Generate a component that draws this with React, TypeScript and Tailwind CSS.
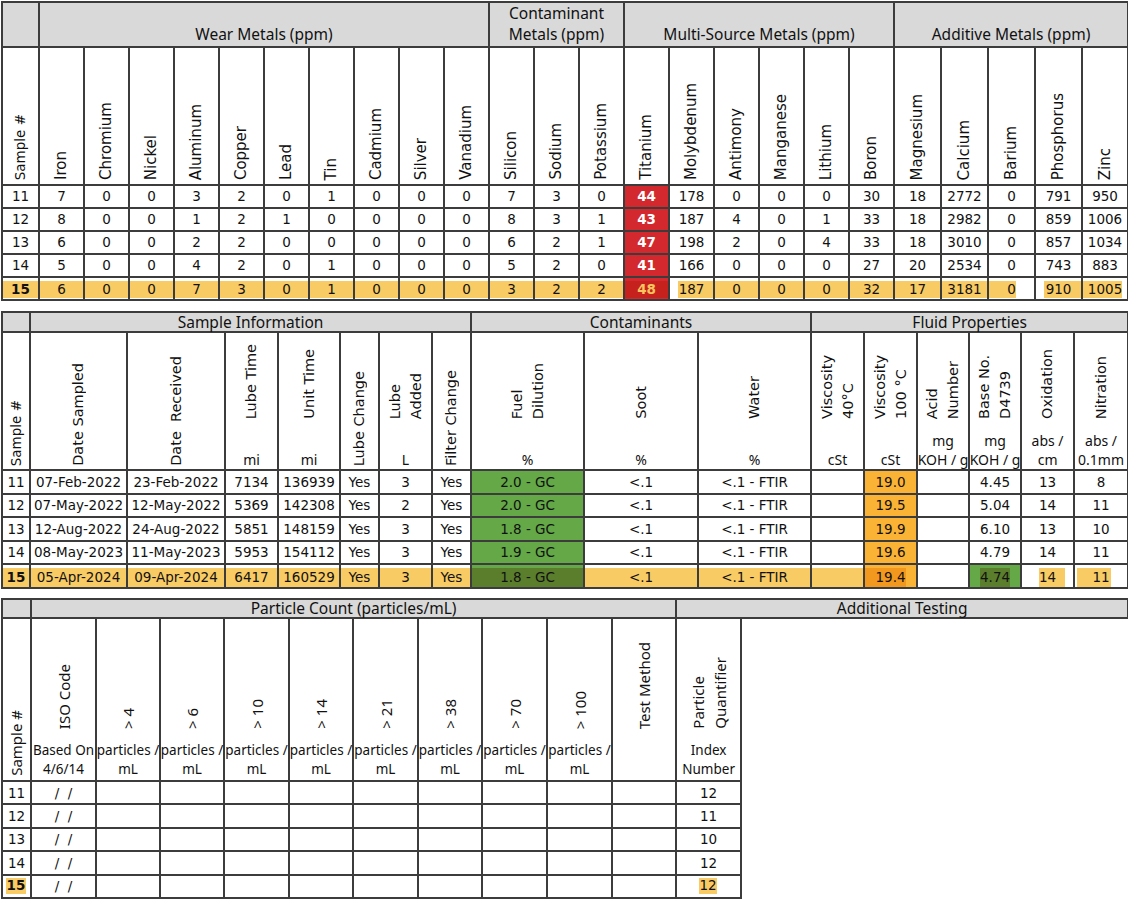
import React from "react";

const B = "border-2 border-[#3c3c3c]";
const DV = "font-['DejaVu_Sans',sans-serif]";
const NS = "font-['Noto_Sans',sans-serif]";
const GREY = "bg-[#d9d9d9]";
const HL = "bg-[#f9cb64]";

type Cell = { v: string; td?: string; band?: string; txt?: string };

// rotated header label, lines start at the bottom
function Rot({ lines, cls }: { lines: string[]; cls: string }) {
  return (
    <div className={`[writing-mode:vertical-rl] rotate-180 text-start whitespace-nowrap ${cls}`}>
      {lines.map((l, i) => (
        <React.Fragment key={i}>
          {i > 0 && <br />}
          {l}
        </React.Fragment>
      ))}
    </div>
  );
}

function DataRow({ cells, rowCls, bandBase }: { cells: Cell[]; rowCls: string; bandBase: string }) {
  return (
    <tr className={rowCls}>
      {cells.map((c, i) => (
        <td
          key={i}
          className={`${B} p-0 text-center ${c.band ? "align-top" : "align-middle"} ${c.td ?? ""}`}
        >
          {c.band ? (
            <div className={`${bandBase} flex items-center justify-center ${c.band}`}>
              <span className={c.txt}>{c.v}</span>
            </div>
          ) : (
            <span className={c.txt}>{c.v}</span>
          )}
        </td>
      ))}
    </tr>
  );
}

/* ---------------- metals ---------------- */

const metalNames = [
  "Iron", "Chromium", "Nickel", "Aluminum", "Copper", "Lead", "Tin", "Cadmium", "Silver", "Vanadium",
  "Silicon", "Sodium", "Potassium",
  "Titanium", "Molybdenum", "Antimony", "Manganese", "Lithium", "Boron",
  "Magnesium", "Calcium", "Barium", "Phosphorus", "Zinc",
];

const metalCols = [
  "w-[37px]",
  "w-[45px]", "w-[45px]", "w-[45px]", "w-[45px]", "w-[45px]", "w-[45px]", "w-[45px]", "w-[45px]", "w-[45px]", "w-[45px]",
  "w-[45px]", "w-[45px]", "w-[45px]",
  "w-[45px]", "w-[45px]", "w-[45px]", "w-[45px]", "w-[45px]", "w-[45px]",
  "w-[47px]", "w-[47px]", "w-[47px]", "w-[47px]", "w-[46px]",
];

const metalData = [
  ["11", "7", "0", "0", "3", "2", "0", "1", "0", "0", "0", "7", "3", "0", "44", "178", "0", "0", "0", "30", "18", "2772", "0", "791", "950"],
  ["12", "8", "0", "0", "1", "2", "1", "0", "0", "0", "0", "8", "3", "1", "43", "187", "4", "0", "1", "33", "18", "2982", "0", "859", "1006"],
  ["13", "6", "0", "0", "2", "2", "0", "0", "0", "0", "0", "6", "2", "1", "47", "198", "2", "0", "4", "33", "18", "3010", "0", "857", "1034"],
  ["14", "5", "0", "0", "4", "2", "0", "1", "0", "0", "0", "5", "2", "0", "41", "166", "0", "0", "0", "27", "20", "2534", "0", "743", "883"],
];

const metal15: Cell[] = [
  { v: "15", band: HL, txt: "font-bold" },
  ...["6", "0", "0", "7", "3", "0", "1", "0", "0", "0", "3", "2", "2"].map((v) => ({ v, band: HL })),
  { v: "48", td: "bg-[#d2282e]", band: "bg-[#c6211c]", txt: "font-bold text-[#f8c55e]" },
  { v: "187", band: `${HL} ml-[8px] pr-[8px]` },
  { v: "0", band: HL },
  { v: "0", band: HL },
  { v: "0", band: HL },
  { v: "32", band: HL },
  { v: "17", band: HL },
  { v: "3181", band: HL },
  { v: "0", band: `${HL} mr-[18px] pl-[18px]` },
  { v: "910", band: `${HL} ml-[8px] pr-[8px]` },
  { v: "1005", band: `${HL} mr-[5px] pl-[5px]` },
];

function MetalsTable() {
  const groups: [string, number][] = [
    ["Wear Metals (ppm)", 10],
    ["Contaminant Metals (ppm)", 3],
    ["Multi-Source Metals (ppm)", 6],
    ["Additive Metals (ppm)", 5],
  ];
  return (
    <table className={`table-fixed border-collapse w-[1126px] ${DV} text-[13.5px]`}>
      <colgroup>
        {metalCols.map((w, i) => (
          <col key={i} className={w} />
        ))}
      </colgroup>
      <thead>
        <tr className="h-[39px]">
          <th className={`${B} ${GREY} p-0`} />
          {groups.map(([g, n]) => (
            <th
              key={g}
              colSpan={n}
              className={`${B} ${GREY} ${NS} p-0 pb-[1px] align-bottom font-normal text-[15.5px] leading-[21px]`}
            >
              {g}
            </th>
          ))}
        </tr>
        <tr className="h-[138px]">
          <th className={`${B} p-0 align-bottom font-normal`}>
            <div className="flex justify-center pb-[4px]">
              <Rot lines={["Sample #"]} cls="text-[13.5px]" />
            </div>
          </th>
          {metalNames.map((m) => (
            <th key={m} className={`${B} p-0 align-bottom font-normal`}>
              <div className="flex justify-center pb-[4px]">
                <Rot lines={[m]} cls="text-[15px]" />
              </div>
            </th>
          ))}
        </tr>
      </thead>
      <tbody>
        {metalData.map((r) => (
          <DataRow
            key={r[0]}
            rowCls="h-[23px]"
            bandBase=""
            cells={r.map((v, i) =>
              i === 14 ? { v, td: "bg-[#d2282e]", txt: "font-bold text-white" } : { v }
            )}
          />
        ))}
        <DataRow rowCls="h-[23px]" bandBase="mt-[3px] h-[17px]" cells={metal15} />
      </tbody>
    </table>
  );
}

/* ---------------- sample / fluid ---------------- */

type H = { lines: string[]; units?: string[] };

const sampleHeads: H[] = [
  { lines: ["Date Sampled"] },
  { lines: ["Date\u00a0 Received"] },
  { lines: ["Lube Time"], units: ["mi"] },
  { lines: ["Unit Time"], units: ["mi"] },
  { lines: ["Lube Change"] },
  { lines: ["Lube", "Added"], units: ["L"] },
  { lines: ["Filter Change"] },
  { lines: ["Fuel", "Dilution"], units: ["%"] },
  { lines: ["Soot"], units: ["%"] },
  { lines: ["Water"], units: ["%"] },
  { lines: ["Viscosity", "40°C"], units: ["cSt"] },
  { lines: ["Viscosity", "100 °C"], units: ["cSt"] },
  { lines: ["Acid", "Number"], units: ["mg", "KOH / g"] },
  { lines: ["Base No.", "D4739"], units: ["mg", "KOH / g"] },
  { lines: ["Oxidation"], units: ["abs /", "cm"] },
  { lines: ["Nitration"], units: ["abs /", "0.1mm"] },
];

const sampleCols = [
  "w-[28px]", "w-[97px]", "w-[98px]", "w-[53px]", "w-[62px]", "w-[39px]", "w-[53px]", "w-[39px]",
  "w-[113px]", "w-[114px]", "w-[113px]",
  "w-[53px]", "w-[53px]", "w-[52px]", "w-[52px]", "w-[53px]", "w-[54px]",
];

const sampleData = [
  ["11", "07-Feb-2022", "23-Feb-2022", "7134", "136939", "Yes", "3", "Yes", "2.0 - GC", "<.1", "<.1 - FTIR", "", "19.0", "", "4.45", "13", "8"],
  ["12", "07-May-2022", "12-May-2022", "5369", "142308", "Yes", "2", "Yes", "2.0 - GC", "<.1", "<.1 - FTIR", "", "19.5", "", "5.04", "14", "11"],
  ["13", "12-Aug-2022", "24-Aug-2022", "5851", "148159", "Yes", "3", "Yes", "1.8 - GC", "<.1", "<.1 - FTIR", "", "19.9", "", "6.10", "13", "10"],
  ["14", "08-May-2023", "11-May-2023", "5953", "154112", "Yes", "3", "Yes", "1.9 - GC", "<.1", "<.1 - FTIR", "", "19.6", "", "4.79", "14", "11"],
];

const sample15: Cell[] = [
  { v: "15", band: HL, txt: "font-bold" },
  ...["05-Apr-2024", "09-Apr-2024", "6417", "160529", "Yes", "3", "Yes"].map((v) => ({ v, band: HL })),
  { v: "1.8 - GC", td: "bg-[#64a847]", band: "bg-[#5a7e2c]" },
  { v: "<.1", band: HL },
  { v: "<.1 - FTIR", band: HL },
  { v: "", band: HL },
  { v: "19.4", td: "bg-[#fbb336]", band: "bg-[#f3981e] mr-[10px] pl-[10px]" },
  { v: "" },
  { v: "4.74", td: "bg-[#64a847]", band: "bg-[#5a7e2c] mx-[10px]" },
  { v: "14", band: `${HL} ml-[17px] mr-[8px] pr-[9px]` },
  { v: "11", band: `${HL} ml-[2px] mr-[16px] pl-[14px]` },
];

function SampleTable() {
  return (
    <table className={`table-fixed border-collapse w-[1126px] mt-[10px] ${DV} text-[13.5px]`}>
      <colgroup>
        {sampleCols.map((w, i) => (
          <col key={i} className={w} />
        ))}
      </colgroup>
      <thead>
        <tr className="h-[20px]">
          <th className={`${B} ${GREY} p-0`} />
          {([
            ["Sample Information", 7],
            ["Contaminants", 3],
            ["Fluid Properties", 6],
          ] as [string, number][]).map(([g, n]) => (
            <th
              key={g}
              colSpan={n}
              className={`${B} ${GREY} ${NS} p-0 align-middle font-normal text-[15.5px] leading-[18px]`}
            >
              {g}
            </th>
          ))}
        </tr>
        <tr className="h-[138px]">
          <th className={`${B} p-0 align-bottom font-normal`}>
            <div className="flex justify-center pb-[3px]">
              <Rot lines={["Sample #"]} cls="text-[13.5px]" />
            </div>
          </th>
          {sampleHeads.map((h, i) => (
            <th key={i} className={`${B} p-0 align-bottom font-normal`}>
              <div className="flex flex-col items-center">
                <div className={h.units ? "pb-[5px]" : "pb-[3px]"}>
                  <Rot lines={h.lines} cls="text-[14.5px] leading-[21px]" />
                </div>
                {h.units && (
                  <div className={`h-[45px] flex flex-col justify-end items-center ${NS} text-[14px] leading-[19px]`}>
                    {h.units.map((u) => (
                      <div key={u} className="whitespace-nowrap">
                        {u}
                      </div>
                    ))}
                  </div>
                )}
              </div>
            </th>
          ))}
        </tr>
      </thead>
      <tbody>
        {sampleData.map((r) => (
          <DataRow
            key={r[0]}
            rowCls="h-[23.5px]"
            bandBase=""
            cells={r.map((v, i) =>
              i === 8
                ? { v, td: "bg-[#64a847]" }
                : i === 12
                ? { v, td: "bg-[#fbb336]" }
                : { v }
            )}
          />
        ))}
        <DataRow rowCls="h-[23.5px]" bandBase="mt-[3px] h-[19px]" cells={sample15} />
      </tbody>
    </table>
  );
}

/* ---------------- particle count ---------------- */

const particleHeads: H[] = [
  { lines: ["ISO Code"], units: ["Based On", "4/6/14"] },
  { lines: ["> 4"], units: ["particles /", "mL"] },
  { lines: ["> 6"], units: ["particles /", "mL"] },
  { lines: ["> 10"], units: ["particles /", "mL"] },
  { lines: ["> 14"], units: ["particles /", "mL"] },
  { lines: ["> 21"], units: ["particles /", "mL"] },
  { lines: ["> 38"], units: ["particles /", "mL"] },
  { lines: ["> 70"], units: ["particles /", "mL"] },
  { lines: ["> 100"], units: ["particles /", "mL"] },
  { lines: ["Test Method"], units: [] },
  { lines: ["Particle", "Quantifier"], units: ["Index", "Number"] },
];

const particleCols = [
  "w-[29px]", "w-[65px]", "w-[64px]", "w-[64px]", "w-[65px]", "w-[64px]", "w-[65px]",
  "w-[64px]", "w-[65px]", "w-[65px]", "w-[64px]", "w-[65px]", "w-[387px]",
];

const pq = ["12", "11", "10", "12"];

function ParticleTable() {
  const rowCells = (s: string, q: string, last: boolean): Cell[] => [
    last ? { v: s, band: `${HL} ml-[3px] mr-[4px]`, txt: "font-bold" } : { v: s },
    { v: "/\u00a0\u00a0/" },
    ...Array.from({ length: 9 }, () => ({ v: "" })),
    last ? { v: q, band: `${HL} ml-[22px] mr-[23px]` } : { v: q },
  ];
  return (
    <table className={`table-fixed border-collapse w-[1126px] mt-[9px] ${DV} text-[13.5px]`}>
      <colgroup>
        {particleCols.map((w, i) => (
          <col key={i} className={w} />
        ))}
      </colgroup>
      <thead>
        <tr className="h-[19px]">
          <th className={`${B} ${GREY} p-0`} />
          <th colSpan={10} className={`${B} ${GREY} ${NS} p-0 align-middle font-normal text-[15.5px] leading-[17px]`}>
            Particle Count (particles/mL)
          </th>
          <th colSpan={2} className={`${B} ${GREY} ${NS} p-0 align-middle font-normal text-[15.5px] leading-[17px]`}>
            Additional Testing
          </th>
        </tr>
        <tr className="h-[163px]">
          <th className={`${B} p-0 align-bottom font-normal`}>
            <div className="flex justify-center pb-[4px]">
              <Rot lines={["Sample #"]} cls={`${NS} text-[15px]`} />
            </div>
          </th>
          {particleHeads.map((h, i) => (
            <th key={i} className={`${B} p-0 align-bottom font-normal ${NS}`}>
              <div className="flex flex-col items-center">
                <div className="pb-[4px]">
                  <Rot lines={h.lines} cls="text-[15px] leading-[22px]" />
                </div>
                <div className="h-[47px] flex flex-col justify-end items-center pb-[1px] text-[13.5px] leading-[19px]">
                  {(h.units ?? []).map((u) => (
                    <div key={u} className="whitespace-nowrap">
                      {u}
                    </div>
                  ))}
                </div>
              </div>
            </th>
          ))}
          <th className="p-0 border-0" />
        </tr>
      </thead>
      <tbody>
        {["11", "12", "13", "14", "15"].map((s, i) => (
          <tr key={s} className="h-[23.4px]">
            {rowCells(s, i < 4 ? pq[i] : "12", i === 4).map((c, j) => (
              <td key={j} className={`${B} p-0 text-center ${c.band ? "align-top" : "align-middle"}`}>
                {c.band ? (
                  <div className={`mt-[2px] h-[16px] flex items-center justify-center ${c.band}`}>
                    <span className={c.txt}>{c.v}</span>
                  </div>
                ) : (
                  <span className={c.txt}>{c.v}</span>
                )}
              </td>
            ))}
            <td className="p-0 border-0" />
          </tr>
        ))}
      </tbody>
    </table>
  );
}

export default function App() {
  return (
    <div className="w-[1128px] min-h-[900px] bg-white text-[#111] pl-[1px] pt-[1px] flex flex-col">
      <MetalsTable />
      <SampleTable />
      <ParticleTable />
    </div>
  );
}
